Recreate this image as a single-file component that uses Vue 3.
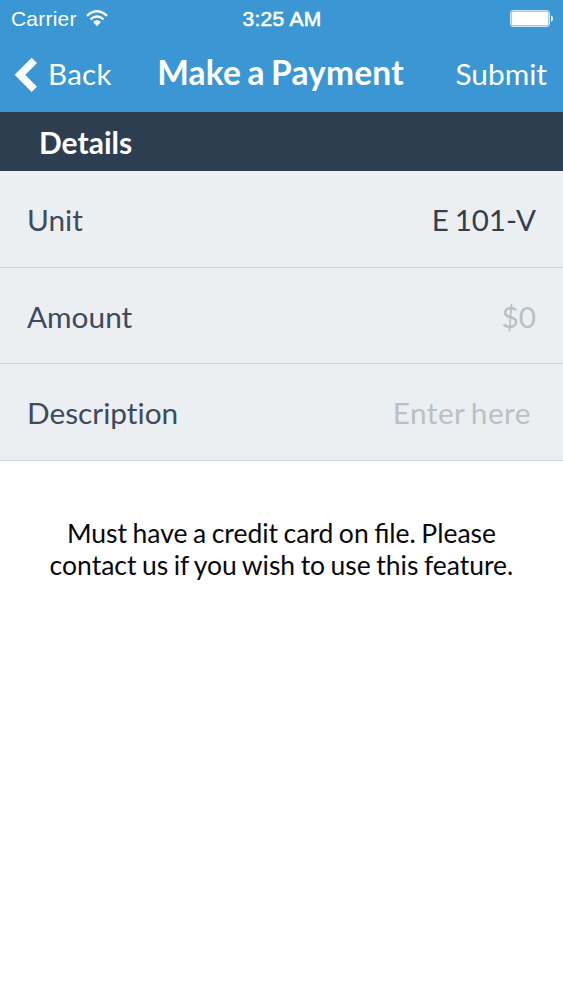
<script setup>
const rows = [
  { label: 'Unit', value: 'E 101-V', kind: 'unit' },
  { label: 'Amount', value: '$0', kind: 'amount' },
  { label: 'Description', value: 'Enter here', kind: 'description' },
]
</script>

<template>
  <main class="screen">
    <header>
      <div class="status">
        <div class="carrier">
          <span>Carrier</span>
          <svg class="wifi" width="22" height="17" viewBox="0 0 22 17">
            <path d="M1 5.8Q11 -3.2 21 5.8M4.5 9.3Q11 3.7 17.5 9.3" fill="none" stroke="#fff" stroke-width="2.3" />
            <path d="M7.1 12.1Q11 8.5 14.9 12.1L11 16.2Z" fill="#fff" />
          </svg>
        </div>
        <span class="time">3:25 AM</span>
        <svg class="battery" width="43" height="18" viewBox="0 0 43 18">
          <rect x=".5" y=".5" width="39" height="16" rx="2.5" fill="none" stroke="#fff" stroke-opacity=".75" />
          <rect x="1.5" y="1.5" width="37" height="14" rx="1.5" fill="#fff" />
          <path d="M41 5.5Q43 6 43 8.5T41 11.5Z" fill="#fff" />
        </svg>
      </div>
      <nav>
        <div class="back">
          <svg width="23" height="36" viewBox="0 0 23 36"><path d="M20.3 3.3L6 17.8L20.3 32.3" fill="none" stroke="#fff" stroke-width="7.5" /></svg>
          <span>Back</span>
        </div>
        <h1>Make a Payment</h1>
        <span class="submit">Submit</span>
      </nav>
    </header>
    <h2>Details</h2>
    <section>
      <div v-for="row in rows" :key="row.label" class="row">
        <span class="label">{{ row.label }}</span>
        <span :class="row.kind">{{ row.value }}</span>
      </div>
    </section>
    <p>Must have a credit card on file. Please<br>contact us if you wish to use this feature.</p>
  </main>
</template>

<style>
body { margin: 0; background: #fff; }
</style>
<style scoped>
.screen { height: 1000px; overflow: hidden; background: #fff; font-family: Lato, sans-serif; color: #3d4b5c; }
header { height: 112px; background: #3b97d3; color: #fff; }
.status { height: 37px; display: grid; grid-template-columns: 1fr auto 1fr; align-items: center; padding: 0 10px 0 11px; font: 21px/36px "Liberation Sans", sans-serif; }
.carrier { display: flex; align-items: center; gap: 9px; letter-spacing: .2px; }
.wifi { margin-top: -1px; }
.time { letter-spacing: .3px; -webkit-text-stroke: .6px #fff; }
.battery { justify-self: end; }
nav { height: 75px; display: grid; grid-template-columns: 1fr auto 1fr; align-items: start; padding: 0 16px 0 14px; }
.back { display: flex; align-items: center; gap: 11px; height: 75px; font-size: 29.5px; }
.back span { margin-top: -3px; letter-spacing: .3px; }
h1 { margin: 0; font-size: 33.5px; line-height: 70px; font-weight: 700; white-space: nowrap; letter-spacing: .2px; word-spacing: -2px; }
.submit { justify-self: end; font-size: 29.8px; line-height: 73px; }
h2 { margin: 0; height: 59px; padding-left: 39px; background: #2c3e50; color: #fff; font-size: 30px; line-height: 60px; font-weight: 700; }
.row { height: 96.7px; box-sizing: border-box; border-bottom: 1px solid #d3d6d8; background: #eceff2; padding: 0 27px; display: flex; justify-content: space-between; font-size: 29.8px; line-height: 97.5px; font-variant-ligatures: none; }
.unit { font-size: 29.5px; word-spacing: -1.6px; color: #333f4d; }
.amount, .description { color: #bcbfc4; }
.description { padding-right: 5px; letter-spacing: .45px; word-spacing: -2px; }
p { margin: 56px 0 0; text-align: center; color: #08080c; font-size: 26.5px; line-height: 32px; white-space: nowrap; word-spacing: -1.3px; }
</style>
